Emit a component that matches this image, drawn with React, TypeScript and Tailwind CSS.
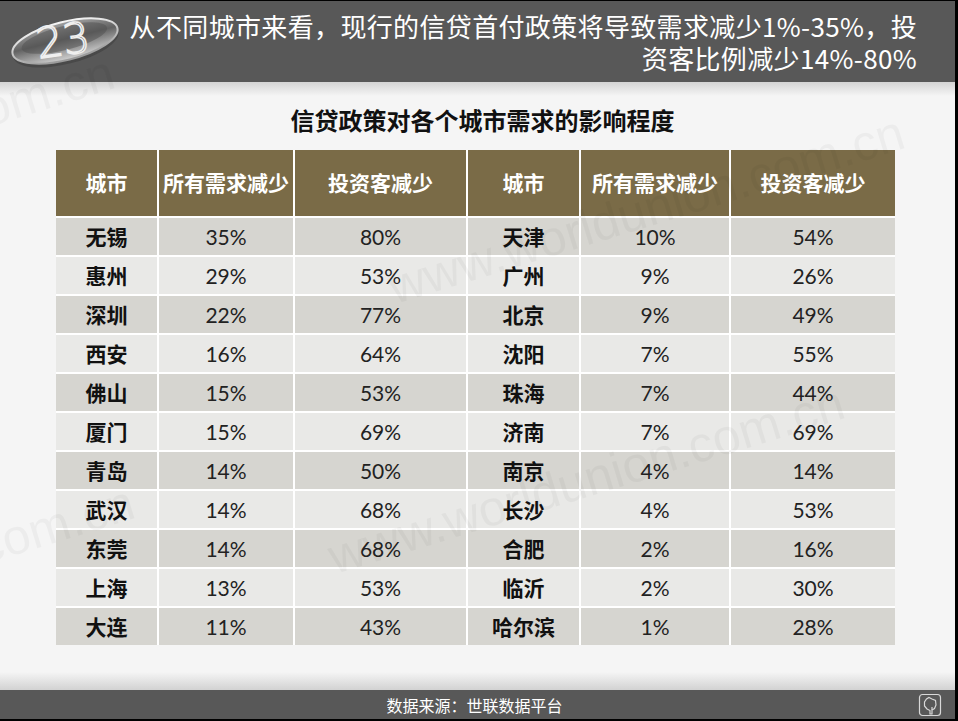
import React from "react";

const cjk = "font-['Noto_Sans_CJK_SC','Noto_Sans',sans-serif]";
const num = "font-['Lato','Noto_Sans_CJK_SC',sans-serif]";

const left: [string, string, string][] = [
  ["无锡", "35%", "80%"],
  ["惠州", "29%", "53%"],
  ["深圳", "22%", "77%"],
  ["西安", "16%", "64%"],
  ["佛山", "15%", "53%"],
  ["厦门", "15%", "69%"],
  ["青岛", "14%", "50%"],
  ["武汉", "14%", "68%"],
  ["东莞", "14%", "68%"],
  ["上海", "13%", "53%"],
  ["大连", "11%", "43%"],
];

const right: [string, string, string][] = [
  ["天津", "10%", "54%"],
  ["广州", "9%", "26%"],
  ["北京", "9%", "49%"],
  ["沈阳", "7%", "55%"],
  ["珠海", "7%", "44%"],
  ["济南", "7%", "69%"],
  ["南京", "4%", "14%"],
  ["长沙", "4%", "53%"],
  ["合肥", "2%", "16%"],
  ["临沂", "2%", "30%"],
  ["哈尔滨", "1%", "28%"],
];

const heads = ["城市", "所有需求减少", "投资客减少", "城市", "所有需求减少", "投资客减少"];

const Logo: React.FC = () => (
  <svg width="118" height="62" viewBox="0 0 118 62">
    <defs>
      <linearGradient id="disk" x1="0" y1="0" x2="0" y2="1">
        <stop offset="0" stopColor="#a0a0a0" />
        <stop offset="0.45" stopColor="#626262" />
        <stop offset="1" stopColor="#d0d0d0" />
      </linearGradient>
      <linearGradient id="rim" x1="0" y1="0" x2="0" y2="1">
        <stop offset="0" stopColor="#f4f4f4" />
        <stop offset="1" stopColor="#9a9a9a" />
      </linearGradient>
    </defs>
    <g transform="rotate(-14 59 33)">
      <ellipse cx="59" cy="37" rx="54" ry="19" fill="#3a3a3a" opacity="0.5" />
      <ellipse cx="59" cy="33" rx="54" ry="19" fill="url(#disk)" stroke="url(#rim)" strokeWidth="2" />
      <ellipse cx="59" cy="30" rx="44" ry="12" fill="#505050" opacity="0.5" />
    </g>
    <text
      x="57"
      y="47"
      textAnchor="middle"
      fontFamily="DejaVu Sans, sans-serif"
      fontWeight="300"
      fontSize="42"
      fill="#5e5e5e"
      stroke="#efefef"
      strokeWidth="1.6"
      transform="rotate(-8 57 33)"
    >
      23
    </text>
  </svg>
);

const HomeIcon: React.FC = () => (
  <svg width="24" height="24" viewBox="0 0 24 24" fill="none" stroke="#d8d8d8" strokeWidth="1.2">
    <rect x="1.5" y="1.5" width="21" height="21" rx="3" />
    <path d="M11 4.5 L14 6 L17.5 7.5 L18 12 L16.5 15.5 L14 17 L14 21 L12 21 L12 17.5 L9 16 L6.5 13 L6.5 9 L8.5 6 Z" />
    <path d="M14 14 L14 17" />
  </svg>
);

const Watermark: React.FC<{ x: number; y: number }> = ({ x, y }) => (
  <span
    className="absolute whitespace-nowrap text-[50px] font-['Liberation_Sans',sans-serif] text-black/[0.035] origin-left -rotate-[17deg] pointer-events-none select-none"
    style={{ left: x, top: y }}
  >
    www.worldunion.com.cn
  </span>
);

const App: React.FC = () => {
  return (
    <div className={`relative w-[958px] h-[721px] overflow-hidden flex flex-col border-t border-black border-r-[3px] bg-[#f5f5f5] ${cjk}`}>
      {/* header bar */}
      <div className="h-[81px] bg-[#585858] flex items-start shrink-0">
        <div className="pl-[6px] pt-[7px]">
          <Logo />
        </div>
        <div className="flex-1 text-right text-white text-[26px] leading-[32px] pt-[9px] pr-[38px] tracking-[0.35px]">
          从不同城市来看，现行的信贷首付政策将导致需求减少1%-35%，投
          <br />
          资客比例减少14%-80%
        </div>
      </div>

      {/* content */}
      <div className="flex-1 flex flex-col items-center bg-[linear-gradient(to_bottom,#d4d4d4_0px,#f5f5f5_14px,#f5f5f5_calc(100%-18px),#d2d2d2_100%)]">
        <h2 className="mt-[22px] text-[24px] leading-[32px] font-bold text-[#111] pl-[10px]">
          信贷政策对各个城市需求的影响程度
        </h2>
        <div className="mt-[14px] mr-[4px] bg-white grid grid-cols-[101px_134px_171px_111px_148px_164px] gap-[2px]">
          {heads.map((h, i) => (
            <div
              key={i}
              className="h-[66px] bg-[#7a6b47] text-white font-bold text-[21px] flex items-center justify-center"
            >
              {h}
            </div>
          ))}
          {left.map((row, r) => {
            const bg = r % 2 === 0 ? "bg-[#d6d5d0]" : "bg-[#e9e9e7]";
            const cells = [...row, ...right[r]];
            return cells.map((c, i) => (
              <div
                key={`${r}-${i}`}
                className={`h-[37px] ${bg} flex items-center justify-center ${
                  i % 3 === 0
                    ? "font-bold text-[21px] text-[#111]"
                    : `${num} text-[21px] text-[#222]`
                }`}
              >
                {c}
              </div>
            ));
          })}
        </div>
      </div>

      {/* footer */}
      <div className="h-[29px] bg-[#585858] flex items-center shrink-0 relative">
        <div className="flex-1 text-center text-white text-[16px] pr-[6px]">数据来源：世联数据平台</div>
        <div className="absolute right-[13px] top-[3px]">
          <HomeIcon />
        </div>
      </div>
      <div className="h-[2px] bg-black shrink-0" />

      {/* watermarks */}
      <Watermark x={-400} y={190} />
      <Watermark x={390} y={250} />
      <Watermark x={330} y={520} />
      <Watermark x={-380} y={620} />
    </div>
  );
};

export default App;
